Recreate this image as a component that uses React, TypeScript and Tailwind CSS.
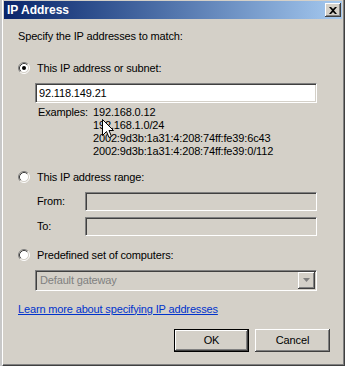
import React from 'react';

const sunken =
  'border border-t-[#808080] border-l-[#808080] border-b-white border-r-white shadow-[inset_1px_1px_0_#404040,inset_-1px_-1px_0_#d4d0c8]';

function Radio({ checked }: { checked?: boolean }) {
  return (
    <svg width="12" height="12" viewBox="0 0 12 12" className="shrink-0">
      <circle cx="6" cy="6" r="4.5" fill="#fff" />
      <path d="M2.11 9.89A5.5 5.5 0 0 1 9.89 2.11" stroke="#808080" fill="none" />
      <path d="M9.89 2.11A5.5 5.5 0 0 1 2.11 9.89" stroke="#fff" fill="none" />
      <path d="M2.82 9.18A4.5 4.5 0 0 1 9.18 2.82" stroke="#404040" fill="none" />
      <path d="M9.18 2.82A4.5 4.5 0 0 1 2.82 9.18" stroke="#d4d0c8" fill="none" />
      {checked && <circle cx="6" cy="6" r="2" fill="#000" />}
    </svg>
  );
}

function RadioRow({ label, checked, mt }: { label: string; checked?: boolean; mt: string }) {
  return (
    <div className={`flex items-center gap-[7px] h-[14px] ${mt}`}>
      <Radio checked={checked} />
      <span>{label}</span>
    </div>
  );
}

function RangeRow({ label, mt }: { label: string; mt: string }) {
  return (
    <div className={`flex items-center ml-[19px] ${mt}`}>
      <span className="w-[48px]">{label}</span>
      <div className={`w-[232px] h-[19px] bg-[#d4d0c8] ${sunken}`} />
    </div>
  );
}

function Cursor() {
  return (
    <svg width="13" height="20" viewBox="0 0 13 20" className="absolute left-[102px] top-[119px]">
      <path
        d="M0.5 0.5 L0.5 16.5 L4.5 12.5 L7 18.5 L9.5 17.5 L7 11.5 L11.5 11.5 Z"
        fill="#fff"
        stroke="#000"
        strokeWidth="1"
        strokeLinejoin="miter"
      />
    </svg>
  );
}

export default function App() {
  return (
    <div className="relative w-[345px] h-[366px] bg-[#d4d0c8] flex overflow-hidden font-['Liberation_Sans',Arial,sans-serif] text-[11px] tracking-[-0.15px] text-black">
      {/* strip of whatever sits behind the dialog */}
      <div className="w-[2px] h-full bg-[#c8c8c8]" />

      {/* dialog window */}
      <div className="w-[343px] h-full flex flex-col border-l border-l-white border-r border-r-[#404040] border-b border-b-[#404040] shadow-[inset_-1px_-1px_0_#808080] pl-px pr-[2px] pt-px pb-[2px]">
        {/* title bar */}
        <div className="h-[18px] flex items-center justify-between bg-linear-to-r from-[#0a246a] to-[#a6caf0] pl-[3px] pr-px">
          <span className="text-white font-bold text-[12px] tracking-normal">IP Address</span>
          <div className="w-[16px] h-[14px] bg-[#d4d0c8] flex items-center justify-center shadow-[inset_-1px_-1px_0_#404040,inset_1px_1px_0_#fff,inset_-2px_-2px_0_#808080]">
            <svg width="8" height="7" viewBox="0 0 8 7">
              <path d="M0 0h2l2 2 2-2h2L5 3.5 8 7H6L4 5 2 7H0l3-3.5z" fill="#000" />
            </svg>
          </div>
        </div>

        {/* body */}
        <div className="flex flex-col pl-[14px]">
          <div className="h-[14px] flex items-center mt-[10px]">Specify the IP addresses to match:</div>

          <RadioRow label="This IP address or subnet:" checked mt="mt-[18px]" />

          <div className={`ml-[17px] mt-[8px] w-[282px] h-[20px] bg-white flex items-center pl-[3px] ${sunken}`}>
            92.118.149.21
          </div>

          <div className="flex ml-[20px] mt-[3px] leading-[13px]">
            <span className="w-[55px]">Examples:</span>
            <div className="flex flex-col">
              <span>192.168.0.12</span>
              <span>192.168.1.0/24</span>
              <span>2002:9d3b:1a31:4:208:74ff:fe39:6c43</span>
              <span>2002:9d3b:1a31:4:208:74ff:fe39:0/112</span>
            </div>
          </div>

          <RadioRow label="This IP address range:" mt="mt-[12px]" />
          <RangeRow label="From:" mt="mt-[8px]" />
          <RangeRow label="To:" mt="mt-[6px]" />

          <RadioRow label="Predefined set of computers:" mt="mt-[12px]" />

          <div className={`ml-[17px] mt-[8px] w-[282px] h-[21px] bg-[#d4d0c8] flex items-center justify-between pl-[4px] pr-px ${sunken}`}>
            <span className="text-[#808080]">Default gateway</span>
            <div className="w-[17px] h-[17px] bg-[#d4d0c8] flex items-center justify-center shadow-[inset_-1px_-1px_0_#404040,inset_1px_1px_0_#fff,inset_-2px_-2px_0_#808080]">
              <svg width="7" height="5" viewBox="0 0 7 5">
                <path d="M0 0h7L3.5 4z" fill="#808080" />
              </svg>
            </div>
          </div>

          <div className="h-[14px] flex items-center mt-[11px]">
            <span className="text-[#0033cc] underline underline-offset-1">Learn more about specifying IP addresses</span>
          </div>

          <div className="flex justify-end gap-[6px] mt-[13px] pr-[12px]">
            <button className="w-[75px] h-[23px] bg-[#d4d0c8] border border-black flex items-center justify-center shadow-[inset_-1px_-1px_0_#404040,inset_1px_1px_0_#fff,inset_-2px_-2px_0_#808080]">
              OK
            </button>
            <button className="w-[75px] h-[23px] bg-[#d4d0c8] flex items-center justify-center shadow-[inset_-1px_-1px_0_#404040,inset_1px_1px_0_#fff,inset_-2px_-2px_0_#808080]">
              Cancel
            </button>
          </div>
        </div>
      </div>

      <Cursor />
    </div>
  );
}
